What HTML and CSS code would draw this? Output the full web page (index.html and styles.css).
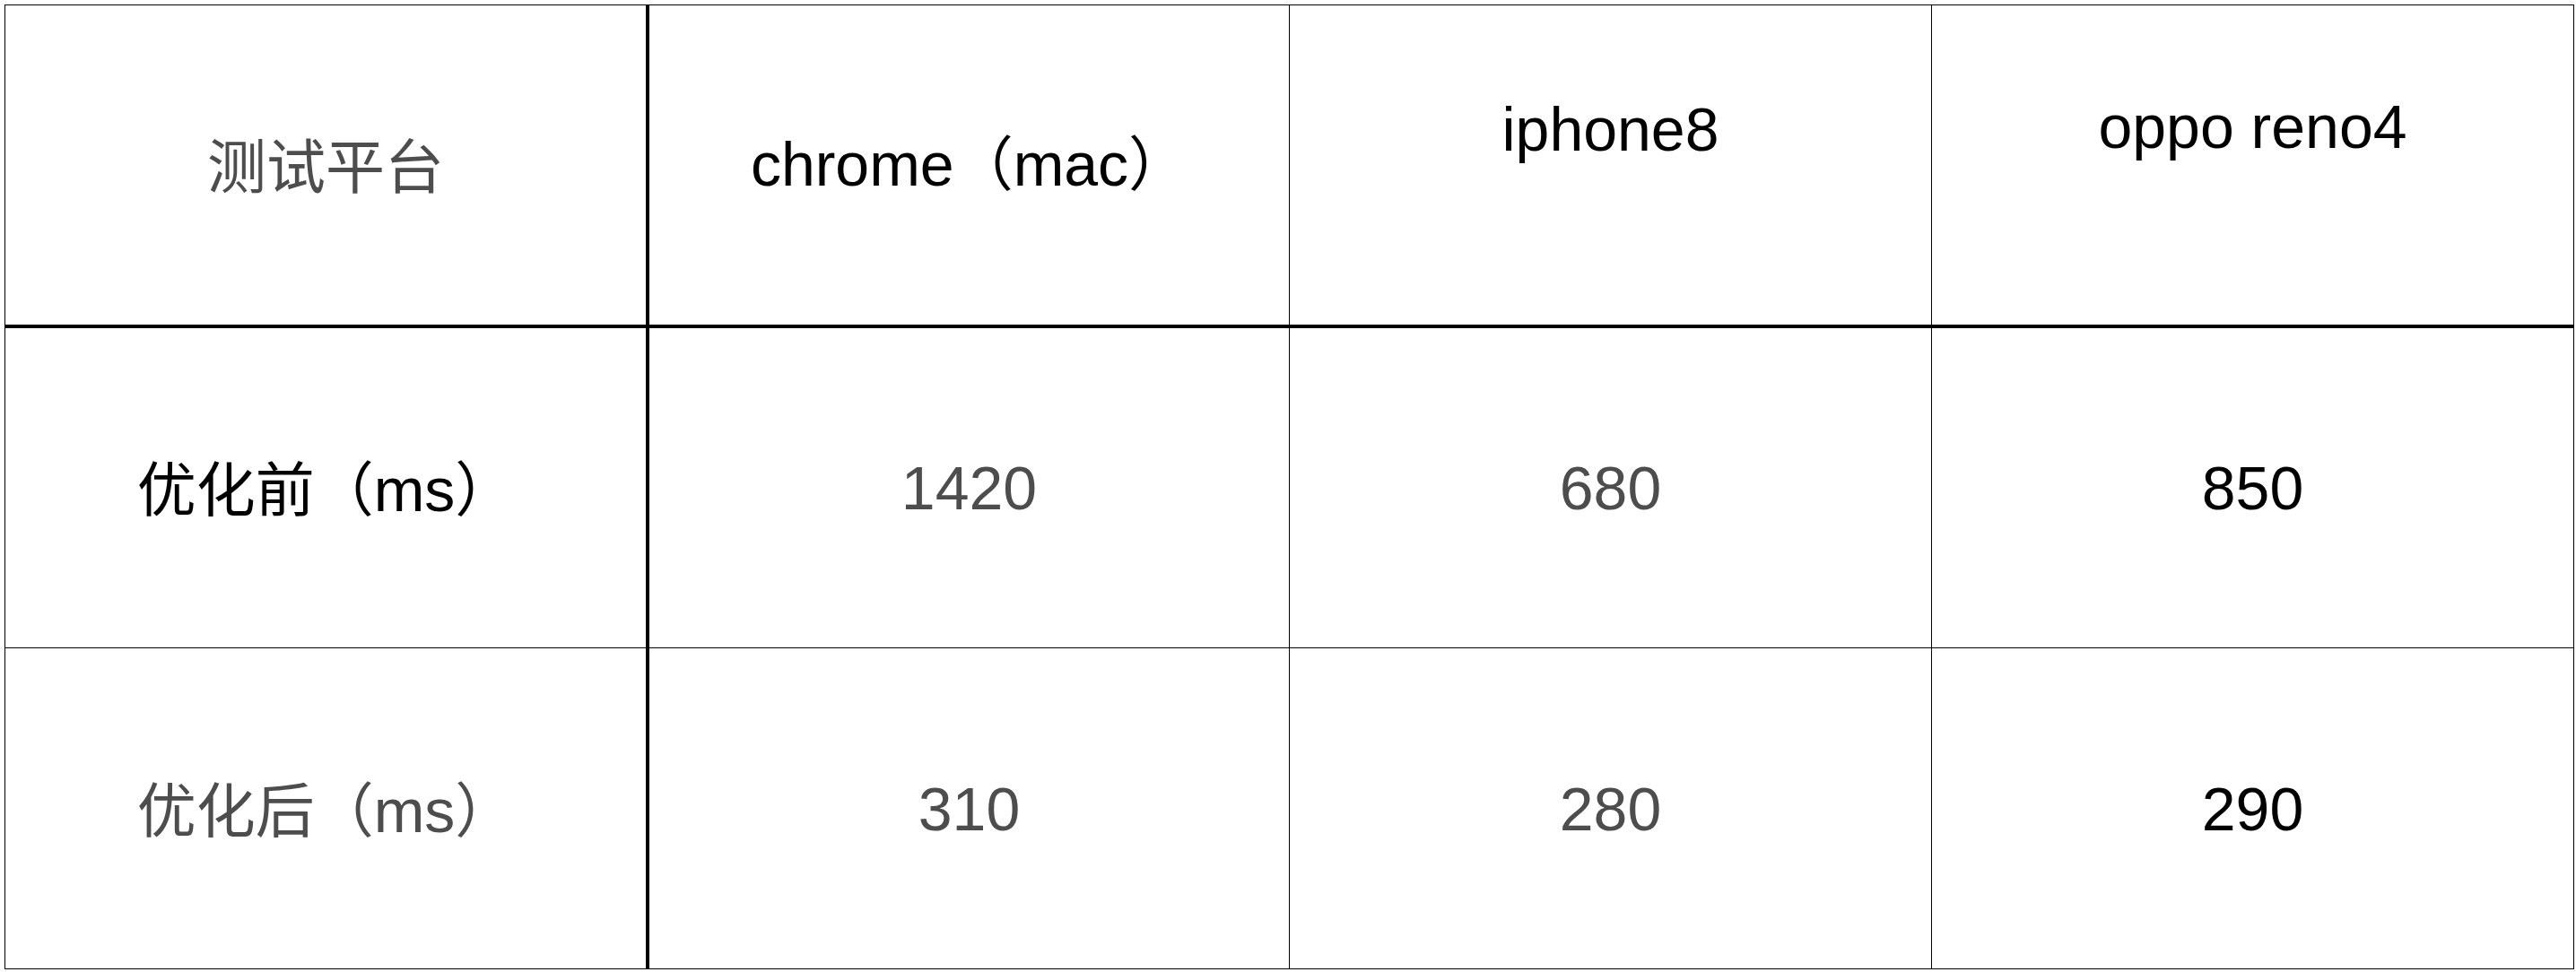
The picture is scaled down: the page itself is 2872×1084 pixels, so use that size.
FILE: index.html
```html
<!DOCTYPE html>
<html lang="zh-CN">
<head>
<meta charset="utf-8">
<title>测试平台</title>
<link rel="stylesheet" href="styles.css">
</head>
<body>
<div class="table">
  <div class="cell head first grey"><span class="cjk">测试平台</span></div>
  <div class="cell head"><span>chrome<span class="cjk">（</span>mac<span class="cjk">）</span></span></div>
  <div class="cell head raise-a">iphone8</div>
  <div class="cell head raise-b">oppo reno4</div>

  <div class="cell first"><span><span class="cjk">优化前（</span>ms<span class="cjk">）</span></span></div>
  <div class="cell grey">1420</div>
  <div class="cell grey">680</div>
  <div class="cell">850</div>

  <div class="cell first grey"><span><span class="cjk">优化后（</span>ms<span class="cjk">）</span></span></div>
  <div class="cell grey">310</div>
  <div class="cell grey">280</div>
  <div class="cell">290</div>
</div>
</body>
</html>
```
FILE: styles.css
```css
html, body {
  margin: 0;
  padding: 0;
  background: #ffffff;
}

body {
  padding: 5px 0 0 5px;
  font-family: "Liberation Sans", "Noto Sans CJK SC", sans-serif;
  font-size: 68px;
  color: #000000;
}

.table {
  display: grid;
  grid-template-columns: 718px 714px 716px 716px;
  grid-template-rows: 360px 357px 358px;
  width: 2864px;
  border-top: 1px solid #000;
  border-left: 1px solid #000;
}

.cell {
  box-sizing: border-box;
  display: flex;
  align-items: center;
  justify-content: center;
  border-right: 1px solid #000;
  border-bottom: 1px solid #000;
  line-height: 1;
  white-space: nowrap;
}

.cjk {
  font-family: "Noto Sans CJK SC", sans-serif;
  font-size: 66px;
}

.cell.first {
  border-right-width: 4px;
}

.cell.head {
  border-bottom-width: 4px;
  padding-bottom: 6px;
}

.grey {
  color: #4d4d4d;
}

.cell.raise-a {
  padding-bottom: 80px;
}

.cell.raise-b {
  padding-bottom: 86px;
}
```
